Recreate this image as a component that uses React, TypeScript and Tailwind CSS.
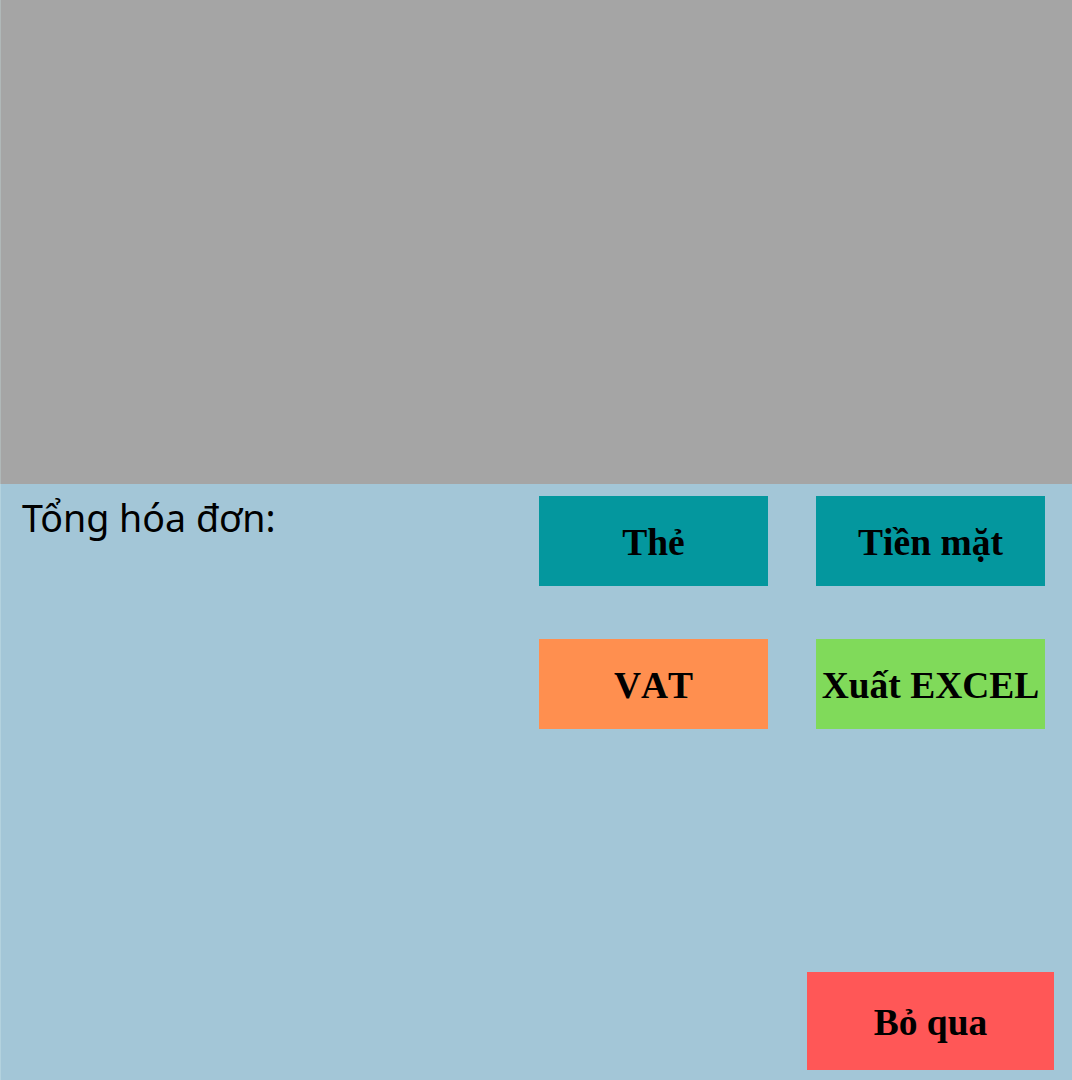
export default function App() {
  const serif = { fontFamily: '"Liberation Serif", "Times New Roman", serif' };
  const btn = "flex items-center justify-center pt-[4px] text-[37.5px] font-bold text-black whitespace-nowrap [font-kerning:none]";
  return (
    <div className="w-[1072px] h-[1080px] flex flex-col overflow-hidden">
      <div className="h-[484px] bg-[#a5a5a5] border-l border-[#b0b8b8]" />
      <div className="flex-1 flex bg-[#a3c6d7] border-l border-[#b3d2de]">
        <div className="flex-1 pl-[21px] pt-[8px]">
          <div
            className="text-[37.6px] leading-[52px] text-black"
            style={{ fontFamily: '"Noto Sans", "Open Sans", sans-serif' }}
          >
            Tổng hóa đơn:
          </div>
        </div>
        <div className="w-[533px] pr-[18px] pt-[12px] pb-[10px] flex flex-col">
          <div className="grid grid-cols-[229px_229px] gap-x-[48px] gap-y-[53px]">
            <div className={`h-[90px] bg-[#04979e] ${btn}`} style={serif}>
              Thẻ
            </div>
            <div className={`h-[90px] bg-[#04979e] ${btn}`} style={serif}>
              Tiền mặt
            </div>
            <div className={`h-[90px] bg-[#ff8f4f] ${btn}`} style={serif}>
              VAT
            </div>
            <div className={`h-[90px] bg-[#80da5a] ${btn}`} style={serif}>
              Xuất EXCEL
            </div>
          </div>
          <div className={`mt-auto self-end w-[247px] h-[98px] bg-[#ff5757] ${btn}`} style={serif}>
            Bỏ qua
          </div>
        </div>
      </div>
    </div>
  );
}
